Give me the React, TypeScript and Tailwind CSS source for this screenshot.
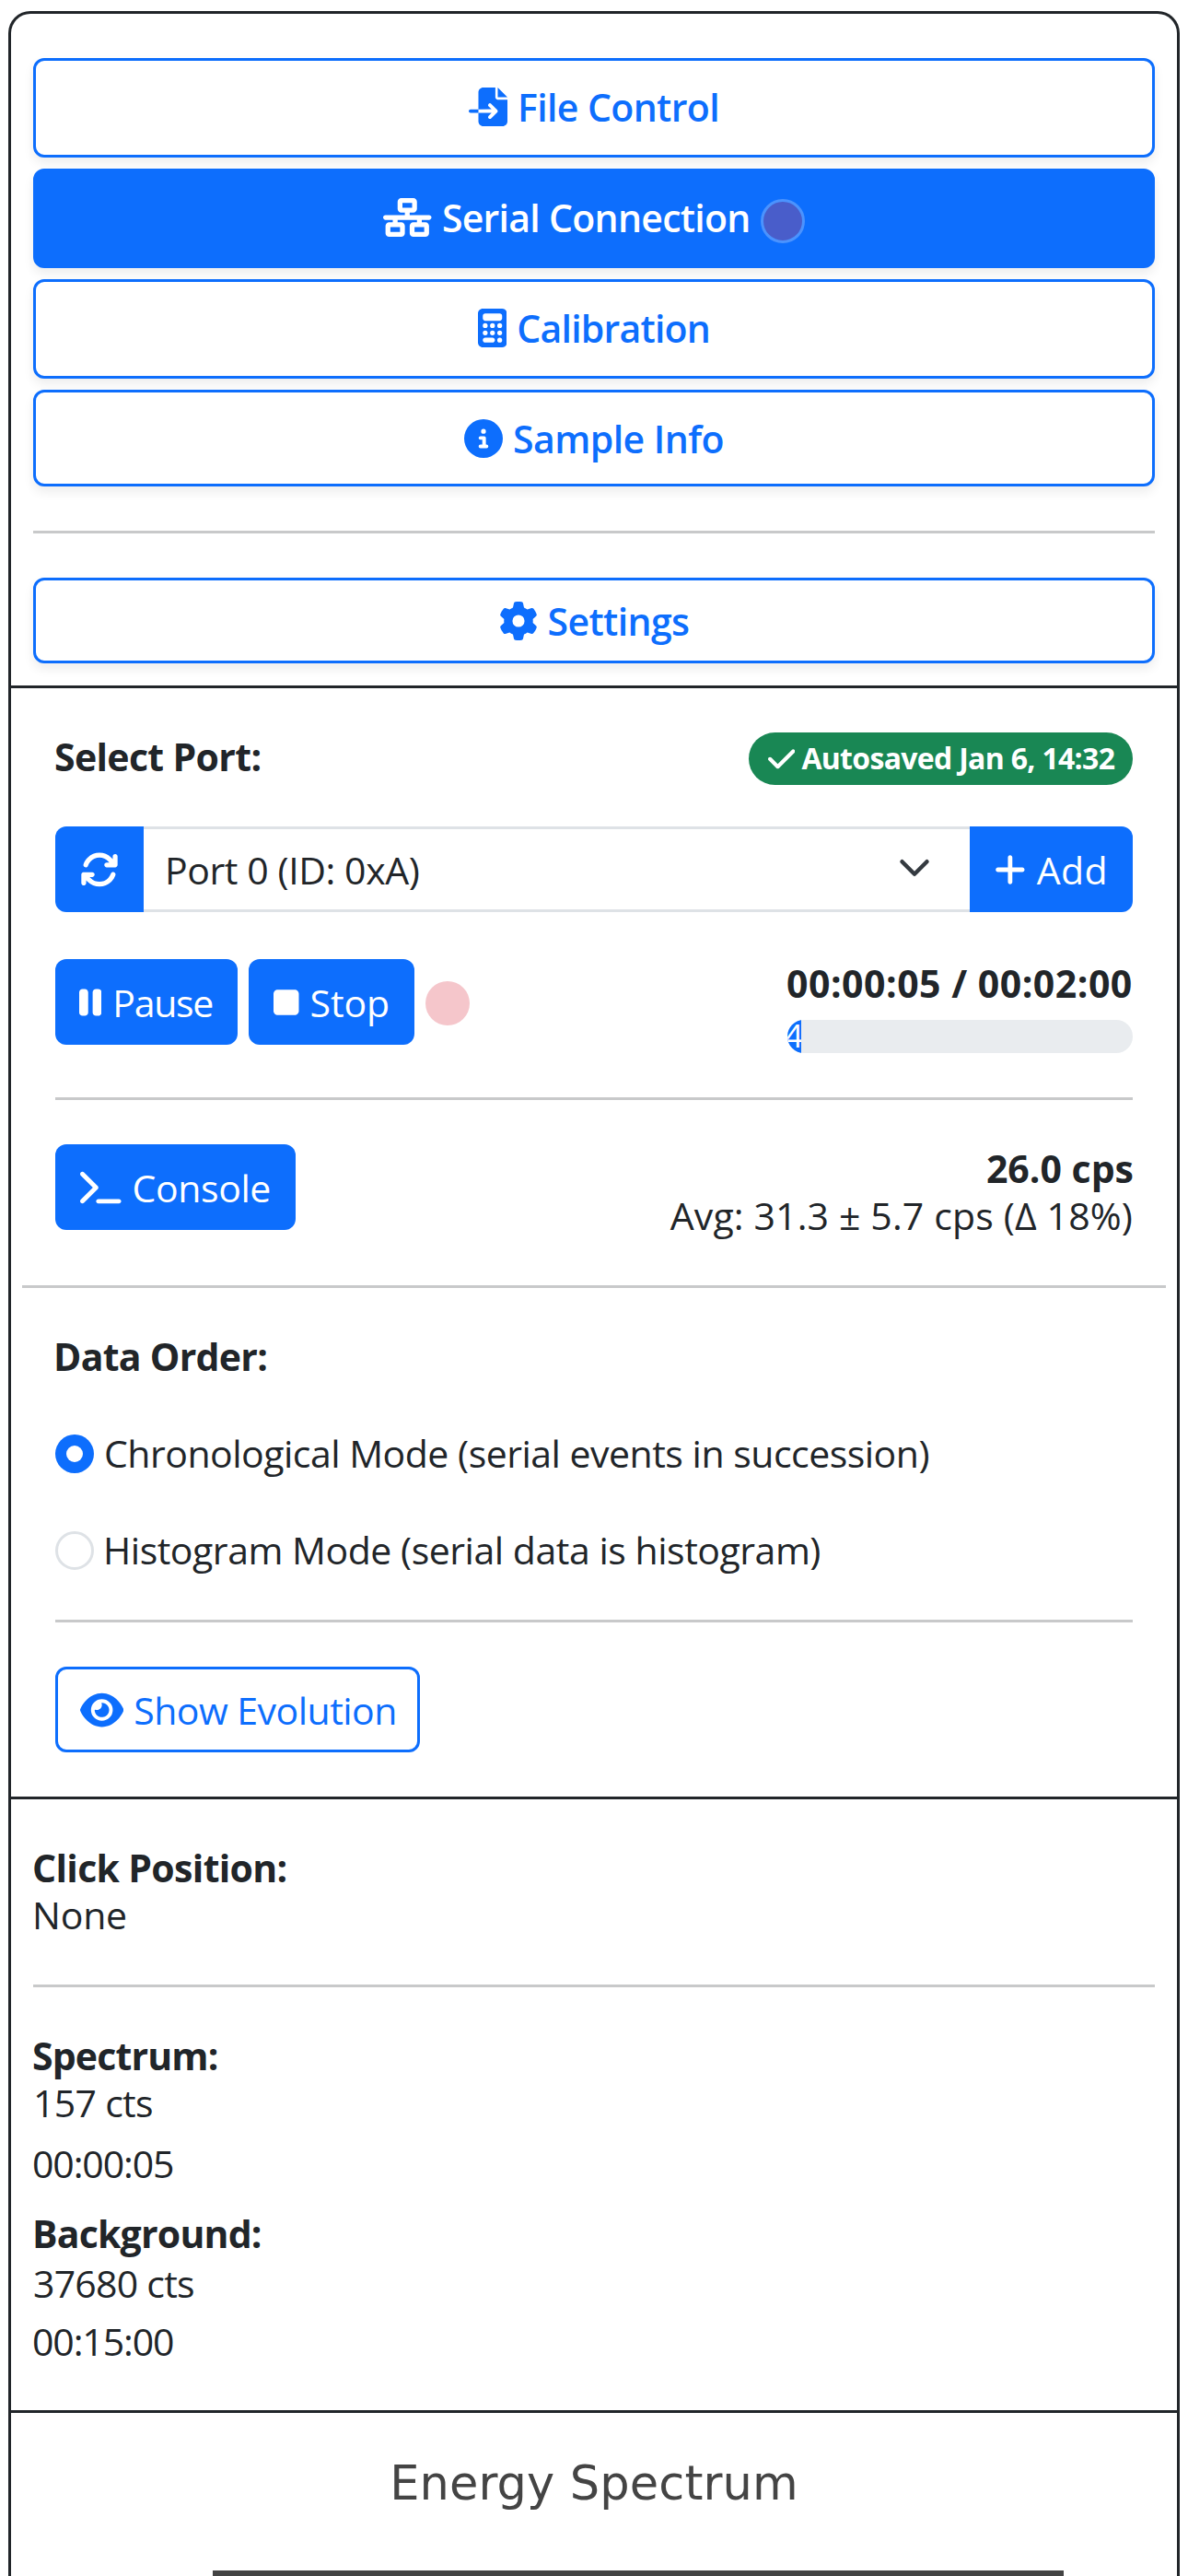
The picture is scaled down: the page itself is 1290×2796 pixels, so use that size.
import type { ReactNode } from "react";
import {
  FaArrowsRotate,
  FaCalculator,
  FaCheck,
  FaCircleInfo,
  FaEye,
  FaFileImport,
  FaGear,
  FaNetworkWired,
  FaPause,
  FaPlus,
  FaStop,
  FaTerminal,
} from "react-icons/fa6";

type NavButtonProps = {
  icon: ReactNode;
  label: string;
  className: string;
  tracking: string;
  active?: boolean;
  children?: ReactNode;
};

function NavButton({ icon, label, className, tracking, active, children }: NavButtonProps) {
  return (
    <button
      className={`flex w-full shrink-0 items-center justify-center gap-[11px] rounded-xl border-3 border-[#0d6efd] font-semibold shadow-[0_6px_12px_rgba(0,0,0,0.075)] ${
        active ? "bg-[#0d6efd] text-white" : "bg-white text-[#0d6efd]"
      } ${className}`}
    >
      {icon}
      <span className={tracking}>{label}</span>
      {children}
    </button>
  );
}

function Rule({ className = "" }: { className?: string }) {
  return <div className={`h-[3px] shrink-0 bg-[#c8c9ca] ${className}`} />;
}

function Radio({ checked }: { checked?: boolean }) {
  return checked ? (
    <span className="flex size-[42px] items-center justify-center rounded-full bg-[#0d6efd]">
      <span className="size-[18px] rounded-full bg-white" />
    </span>
  ) : (
    <span className="size-[42px] rounded-full border-3 border-[#dee2e6]" />
  );
}

function Line({ children, className = "" }: { children: ReactNode; className?: string }) {
  return <div className={`h-[51px] pt-px leading-[51px] ${className}`}>{children}</div>;
}

const solid = "flex h-[93px] items-center bg-[#0d6efd] px-[27px] text-white";

export default function App() {
  return (
    <div className="h-[2796px] w-[1290px] overflow-hidden bg-white pt-3 pl-[9px] font-['Open_Sans','Noto_Sans',sans-serif] text-[41px] leading-[51px] whitespace-nowrap text-[#212529]">
      <main className="flex h-full w-[1272px] flex-col rounded-t-3xl border-3 border-b-0 border-[#212529]">
        {/* Panel tabs */}
        <nav className="flex h-[732px] shrink-0 flex-col border-b-3 border-[#212529] px-6 pt-12">
          <div className="flex flex-col gap-3">
            <NavButton
              icon={<FaFileImport className="size-[42px]" />}
              label="File Control"
              tracking="tracking-[-0.61px]"
              className="h-[108px] pb-0.5"
            />
            <NavButton
              icon={<FaNetworkWired className="h-[42px] w-[52.5px]" />}
              label="Serial Connection"
              tracking="tracking-[-0.72px]"
              className="h-[108px] pb-0.5"
              active
            >
              <span className="mt-2 size-12 rounded-full border-3 border-[#4b93fe] bg-[#495dca]" />
            </NavButton>
            <NavButton
              icon={<FaCalculator className="h-[42px] w-[31.5px]" />}
              label="Calibration"
              tracking="tracking-[-0.78px]"
              className="h-[108px] pb-0.5"
            />
            <NavButton
              icon={<FaCircleInfo className="size-[42px]" />}
              label="Sample Info"
              tracking="translate-y-px tracking-[-0.55px]"
              className="h-[105px]"
            />
          </div>
          <Rule className="my-12" />
          <NavButton
            icon={<FaGear className="size-[42px]" />}
            label="Settings"
            tracking="translate-y-px tracking-[-0.61px]"
            className="h-[93px]"
          />
        </nav>

        {/* Serial connection panel */}
        <section className="flex h-[1206px] shrink-0 flex-col border-b-3 border-[#212529] px-3">
          <div className="flex flex-col px-9 pt-[42px]">
            <div className="flex h-[63px] items-end justify-between">
              <h2 className="-ml-px translate-y-px leading-[63px] font-bold tracking-[-0.65px]">
                Select Port:
              </h2>
              <span className="flex h-[57px] w-[417px] items-center gap-[7px] rounded-full bg-[#198754] pb-1 pl-[21px] text-[32px] font-bold text-white">
                <FaCheck className="mt-1 h-[33.6px] w-[29.4px]" />
                <span className="translate-y-px tracking-[-0.69px]">Autosaved Jan 6, 14:32</span>
              </span>
            </div>

            <div className="mt-[45px] flex h-[93px]">
              <button className={`${solid} w-24 rounded-l-xl`}>
                <FaArrowsRotate className="size-[42px]" />
              </button>
              <div className="flex flex-1 items-center justify-between border-y-3 border-[#dee2e6] pr-[42px] pl-[23px]">
                <span className="translate-y-px tracking-[-0.42px]">Port 0 (ID: 0xA)</span>
                <svg viewBox="0 0 16 16" className="mb-1 size-9" fill="none">
                  <path
                    d="m2 5 6 6 6-6"
                    stroke="#343a40"
                    strokeWidth="2"
                    strokeLinecap="round"
                    strokeLinejoin="round"
                  />
                </svg>
              </div>
              <button className={`${solid} w-[177px] gap-[12px] rounded-r-xl`}>
                <FaPlus className="h-[42px] w-[36.75px]" />
                <span className="translate-y-px tracking-[0.4px]">Add</span>
              </button>
            </div>

            <div className="mt-[51px] flex h-[102px] items-start justify-between">
              <div className="flex items-center gap-3">
                <button className={`${solid} w-[198px] gap-[12px] pl-[26px] rounded-xl`}>
                  <FaPause className="h-[42px] w-[26.25px]" />
                  <span className="translate-y-px tracking-[-1.3px]">Pause</span>
                </button>
                <button className={`${solid} w-[180px] gap-[12px] rounded-xl`}>
                  <FaStop className="h-[42px] w-[31.5px]" />
                  <span className="translate-y-px tracking-[-0.09px]">Stop</span>
                </button>
                <span className="mt-[3px] size-12 rounded-full bg-[#f5c6cb]" />
              </div>
              <div className="w-[375px]">
                <Line className="-ml-px font-bold tracking-[0.5px]">00:00:05 / 00:02:00</Line>
                <div className="mt-[15px] h-9 overflow-hidden rounded-[18px] bg-[#e9ecef]">
                  <div className="h-9 w-[15px] overflow-hidden bg-[#0d6efd] -indent-[3px] text-[35px] leading-[33px] text-white">
                    4%
                  </div>
                </div>
              </div>
            </div>

            <Rule className="my-12" />

            <div className="flex h-[102px] items-start justify-between">
              <button className={`${solid} w-[261px] gap-[12px] rounded-xl`}>
                <FaTerminal className="h-[42px] w-[47.25px]" />
                <span className="translate-y-px tracking-[-0.4px]">Console</span>
              </button>
              <div className="text-right">
                <Line className="-mr-px font-bold">26.0 cps</Line>
                <Line className="tracking-[0.14px]">Avg: 31.3 ± 5.7 cps (Δ 18%)</Line>
              </div>
            </div>
          </div>

          <Rule className="mt-[51px]" />

          <div className="flex flex-col px-9 pt-[42px]">
            <h2 className="-ml-0.5 translate-y-px leading-[63px] font-bold tracking-[-0.72px]">
              Data Order:
            </h2>
            <label className="mt-[54px] flex h-[42px] items-center gap-[11px]">
              <Radio checked />
              <span className="pb-0.5 tracking-[-0.5px]">
                Chronological Mode (serial events in succession)
              </span>
            </label>
            <label className="mt-[63px] flex h-[42px] items-center gap-[10px]">
              <Radio />
              <span className="pb-0.5 tracking-[-0.47px]">
                Histogram Mode (serial data is histogram)
              </span>
            </label>
            <Rule className="mt-[54px] mb-12" />
            <button className="flex h-[93px] w-[396px] items-center gap-[11px] rounded-xl border-3 border-[#0d6efd] pl-6 text-[#0d6efd]">
              <FaEye className="h-[42px] w-[47.25px]" />
              <span className="translate-y-px tracking-[-0.52px]">Show Evolution</span>
            </button>
          </div>
        </section>

        {/* Counters */}
        <section className="flex h-[666px] shrink-0 flex-col border-b-3 border-[#212529] px-6 pt-12">
          <Line className="-ml-px font-bold tracking-[-0.67px]">Click Position:</Line>
          <Line className="-ml-px tracking-[-0.2px]">None</Line>
          <Rule className="mt-[51px] mb-12" />
          <Line className="-ml-px font-bold tracking-[-0.85px]">Spectrum:</Line>
          <Line className="tracking-[-0.71px]">157 cts</Line>
          <Line className="mt-[15px] -ml-px tracking-[-1.1px]">00:00:05</Line>
          <Line className="mt-[25px] -ml-px font-bold tracking-[-0.8px]">Background:</Line>
          <Line className="mt-[3px] tracking-[-0.76px]">37680 cts</Line>
          <Line className="mt-3 -ml-px tracking-[-1.1px]">00:15:00</Line>
        </section>

        {/* Chart */}
        <section className="flex flex-col pt-[47px] text-[#444]">
          <h1 className="text-center font-['DejaVu_Sans',sans-serif] text-[51px] leading-[60px] tracking-[0.12px]">
            Energy Spectrum
          </h1>
          <div className="mt-16 ml-[219px] h-1.5 w-[924px] bg-[#444]" />
        </section>
      </main>
    </div>
  );
}
